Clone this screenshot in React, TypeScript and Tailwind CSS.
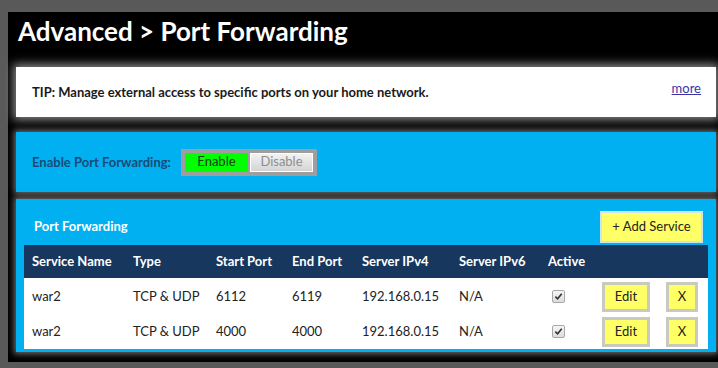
const rows = [
  { name: "war2", type: "TCP & UDP", start: "6112", end: "6119", ipv4: "192.168.0.15", ipv6: "N/A" },
  { name: "war2", type: "TCP & UDP", start: "4000", end: "4000", ipv4: "192.168.0.15", ipv6: "N/A" },
];

const cols = "grid grid-cols-[101px_83px_76px_70px_97px_89px_56px_64px_1fr]";

function Check() {
  return (
    <span className="flex h-[13px] w-[13px] items-center justify-center rounded-[2px] border border-[#a8a8a8] bg-gradient-to-b from-[#f6f6f6] to-[#dcdcdc]">
      <svg viewBox="0 0 10 10" className="h-[9px] w-[9px]">
        <path d="M1.5 5.2 L4 7.6 L8.6 2" fill="none" stroke="#333" strokeWidth="1.8" />
      </svg>
    </span>
  );
}

function YellowBtn({ label, w }: { label: string; w: string }) {
  return (
    <button className={`flex h-[30px] ${w} items-center justify-center border-[3px] border-[#c9c9c0] bg-[#ffff66] text-[13px] text-[#222]`}>
      {label}
    </button>
  );
}

export default function App() {
  return (
    <div
      className="flex h-[368px] w-[718px] flex-col overflow-hidden bg-[#595959] pl-2 pt-3"
      style={{ fontFamily: "Lato, 'Open Sans', sans-serif" }}
    >
      <div className="flex h-[350px] flex-col bg-black">
        <h1 className="ml-[10px] mt-[4px] h-[35px] text-[26px] font-bold leading-[30px] text-white">
          Advanced &gt; Port Forwarding
        </h1>

        <div className="ml-2 mt-[16px] flex h-[50px] w-[700px] items-center justify-between bg-white pl-4 pr-[15px] shadow-[0_0_9px_3px_rgba(160,160,160,0.85)]">
          <p className="pt-[2px] text-[13px] font-bold text-[#1a1a1a]">
            TIP: Manage external access to specific ports on your home network.
          </p>
          <a className="-mt-[7px] text-[13px] text-[#3535a8] underline">more</a>
        </div>

        <div className="ml-2 mt-[15px] flex h-[60px] w-[700px] items-center bg-[#00b0f0] pl-4 shadow-[0_0_6px_2px_rgba(120,120,120,0.9)]">
          <span className="mr-[10px] pt-[1px] text-[13px] font-bold text-[#1b4a78]">Enable Port Forwarding:</span>
          <div className="flex h-[27px] items-center gap-[2px] bg-[#9e9e9e] p-[4px]">
            <button className="flex h-[19px] w-[63px] items-center justify-center bg-[#00ff00] text-[13px] text-[#173a17]">
              Enable
            </button>
            <button className="flex h-[19px] w-[63px] items-center justify-center border border-white bg-gradient-to-b from-[#f2f2f2] to-[#d4d4d4] text-[13px] text-[#8e8e8e]">
              Disable
            </button>
          </div>
        </div>

        <div className="ml-2 mt-[7px] w-[700px] bg-[#00b0f0] px-2 pb-[3px] pt-[12px] shadow-[0_0_6px_2px_rgba(120,120,120,0.9)]">
          <div className="flex h-[32px] items-center justify-between">
            <span className="pl-[10px] text-[13px] font-bold text-white">Port Forwarding</span>
            <button className="mr-[5px] flex h-[32px] w-[103px] items-center justify-center border-2 border-[#cfe3ea] bg-[#ffff66] text-[13px] text-[#222]">
              + Add Service
            </button>
          </div>
          <div className="mt-[2px]">
            <div className={`${cols} h-[33px] items-center bg-[#17375e] text-[13px] font-bold text-white`}>
              <span className="pl-2">Service Name</span>
              <span className="pl-2">Type</span>
              <span className="pl-2">Start Port</span>
              <span className="pl-2">End Port</span>
              <span className="pl-2">Server IPv4</span>
              <span className="pl-2">Server IPv6</span>
              <span className="pl-2">Active</span>
              <span />
              <span />
            </div>
            <div className="bg-white pt-[1px]">
              {rows.map((r, i) => (
                <div key={i} className={`${cols} h-[35px] items-center text-[13px] text-[#222]`}>
                  <span className="pl-2">{r.name}</span>
                  <span className="pl-2">{r.type}</span>
                  <span className="pl-2">{r.start}</span>
                  <span className="pl-2">{r.end}</span>
                  <span className="pl-2">{r.ipv4}</span>
                  <span className="pl-2">{r.ipv6}</span>
                  <span className="pl-[12px]">
                    <Check />
                  </span>
                  <span className="pl-[6px]">
                    <YellowBtn label="Edit" w="w-[48px]" />
                  </span>
                  <span className="pl-[6px]">
                    <YellowBtn label="X" w="w-[32px]" />
                  </span>
                </div>
              ))}
            </div>
          </div>
        </div>
      </div>
    </div>
  );
}
